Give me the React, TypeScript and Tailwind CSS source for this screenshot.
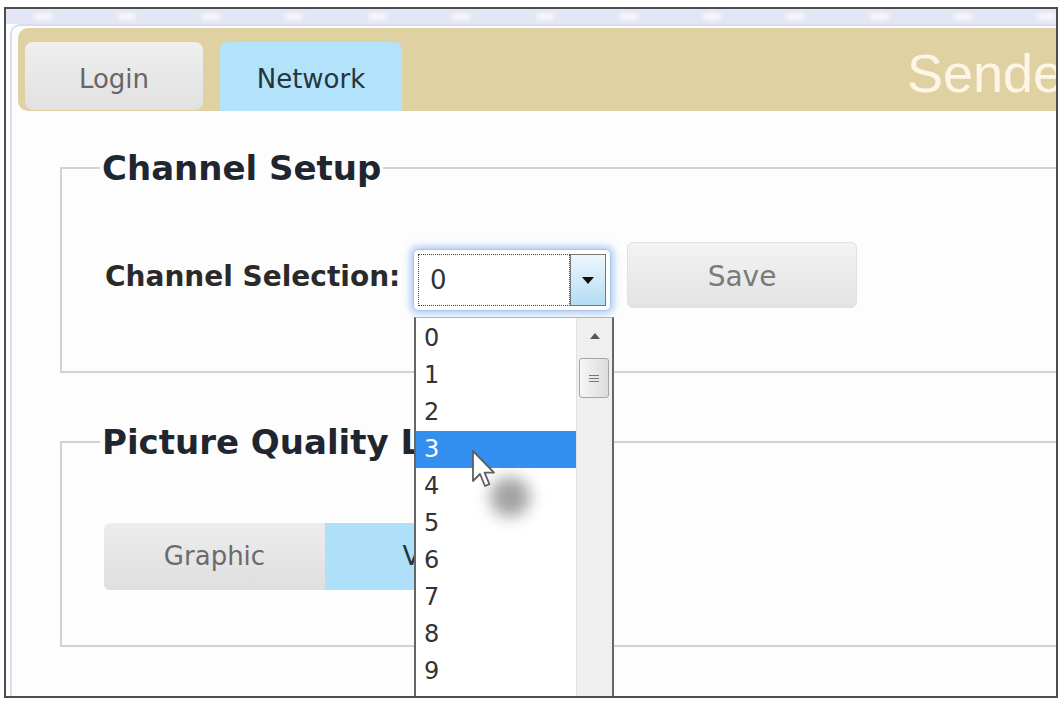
import React from 'react';

const dashes = [0, 1, 2, 3, 4, 5, 6, 7, 8, 9, 10, 11, 12];
const channels = ['0', '1', '2', '3', '4', '5', '6', '7', '8', '9'];

function Cursor() {
  return (
    <svg width="26" height="40" viewBox="0 0 13 20">
      <path
        d="M1 1 V16 L4.5 12.5 L7 18.5 L9.2 17.6 L6.8 11.8 H11.5 Z"
        fill="#ffffff"
        stroke="#5e5e5e"
        strokeWidth="0.9"
        strokeLinejoin="round"
      />
    </svg>
  );
}

function ChannelSelect() {
  return (
    <div className="relative mt-[7px] w-[198px] h-[62px] rounded-[5px] border border-[#a9c4ec] bg-white shadow-[0_0_7px_3px_rgba(120,165,240,0.55)] p-[4px] flex">
      <div className="flex-1 border border-dotted border-[#444] flex items-center pl-[11px] text-[26px] text-[#333]">
        0
      </div>
      <div className="w-[36px] border border-[#777] bg-linear-to-b from-[#eef7fd] to-[#b3dcf4] flex items-center justify-center">
        <svg width="12" height="7" viewBox="0 0 12 7">
          <path d="M0 0 H12 L6 7 Z" fill="#111" />
        </svg>
      </div>

      {/* open list */}
      <div className="absolute left-0 top-[67px] w-[200px] h-[420px] border-2 border-t border-[#666] border-t-[#b5b5b5] bg-white flex z-10">
        <div className="w-[160px] pt-[2px]">
          {channels.map(c => (
            <div
              key={c}
              className={
                c === '3'
                  ? 'h-[37px] leading-[37px] pl-[8px] text-[24px] bg-[#3490f0] text-white'
                  : 'h-[37px] leading-[37px] pl-[8px] text-[24px] text-[#333]'
              }
            >
              {c}
            </div>
          ))}
        </div>
        <div className="flex-1 bg-[#efefef] border-l border-[#e2e2e2] flex flex-col items-center">
          <svg className="mt-[15px]" width="10" height="6" viewBox="0 0 10 6">
            <path d="M0 6 L5 0 L10 6 Z" fill="#555" />
          </svg>
          <div className="mt-[19px] mr-[2px] w-[30px] h-[40px] rounded-[3px] border border-[#a5a5a5] bg-linear-to-r from-[#f6f6f6] to-[#dcdcdc] flex flex-col items-center justify-center gap-[2px]">
            <div className="w-[10px] h-px bg-[#777]" />
            <div className="w-[10px] h-px bg-[#777]" />
            <div className="w-[10px] h-px bg-[#777]" />
          </div>
        </div>
      </div>
    </div>
  );
}

export default function App() {
  return (
    <div
      className="w-[1062px] h-[701px] bg-white pt-[7px] pl-[4px]"
      style={{ fontFamily: '"DejaVu Sans", Verdana, sans-serif' }}
    >
      <div className="relative w-[1054px] h-[691px] border-2 border-[#4d4d4d] bg-[#fdfdfd] overflow-hidden">
        {/* browser strip */}
        <div className="h-[15px] bg-[#e3e6f4] flex gap-[65px] pl-[28px] pt-[4px]">
          {dashes.map(d => (
            <div key={d} className="w-[20px] h-[7px] rounded-sm bg-white/70 blur-[2px]" />
          ))}
        </div>

        <div className="ml-[4px] h-full border-l-2 border-t-2 border-[#d6deef] rounded-tl-[10px]">
          {/* header with tabs */}
          <div className="ml-[6px] mt-[2px] w-[1100px] h-[83px] rounded-l-[10px] bg-[#e0d1a3] flex items-start pl-[7px] pt-[14px]">
            <div className="w-[178px] h-[68px] rounded-[8px] bg-linear-to-b from-[#efefef] to-[#e1e1e1] flex items-center justify-center pt-[6px] text-[26px] text-[#666]">
              Login
            </div>
            <div className="ml-[17px] w-[182px] h-[69px] rounded-t-[8px] bg-[#b2e3fb] flex items-center justify-center pt-[6px] text-[26px] text-[#26343e]">
              Network
            </div>
            <div
              className="ml-[505px] mt-[4px] text-[54px] leading-[54px] text-[#fdf6e6] whitespace-nowrap"
              style={{ fontFamily: '"Liberation Sans", Arial, sans-serif' }}
            >
              Sender
            </div>
          </div>

          {/* channel setup */}
          <fieldset className="ml-[48px] mt-[37px] w-[1100px] h-[225px] border-2 border-[#d2d2d2] pl-[38px]">
            <legend className="px-[2px] text-[34px] leading-[40px] font-bold text-[#1f2630]">
              Channel Setup
            </legend>
            <div className="mt-[54px] flex items-start">
              <div className="ml-[5px] mt-[18px] w-[308px] text-[28px] leading-[34px] font-bold text-[#2a2a2a] whitespace-nowrap">
                Channel Selection:
              </div>
              <ChannelSelect />
              <button className="ml-[16px] w-[230px] h-[66px] rounded-[6px] border border-[#e0e0e0] bg-linear-to-b from-[#f3f3f3] to-[#e3e3e3] pt-[3px] text-[28px] text-[#7a7a7a]">
                Save
              </button>
            </div>
          </fieldset>

          {/* picture quality */}
          <fieldset className="ml-[48px] mt-[49px] w-[1100px] h-[225px] border-2 border-[#d2d2d2] pl-[38px]">
            <legend className="px-[2px] text-[34px] leading-[40px] font-bold text-[#1f2630] whitespace-nowrap">
              Picture Quality Level
            </legend>
            <div className="mt-[61px] ml-[4px] flex">
              <div className="w-[221px] h-[67px] rounded-l-[6px] bg-linear-to-b from-[#ededed] to-[#dfdfdf] flex items-center justify-center text-[26px] text-[#6b6b6b]">
                Graphic
              </div>
              <div className="w-[228px] h-[67px] rounded-r-[6px] bg-[#aee1f9] flex items-center justify-center text-[26px] text-[#24343f]">
                Video
              </div>
            </div>
          </fieldset>
        </div>

        {/* mouse pointer + click shadow */}
        <div className="absolute left-[484px] top-[468px] w-[40px] h-[40px] rounded-full bg-[#555] opacity-55 blur-[8px] z-20" />
        <div className="absolute left-[465px] top-[440px] z-30">
          <Cursor />
        </div>
      </div>
    </div>
  );
}
